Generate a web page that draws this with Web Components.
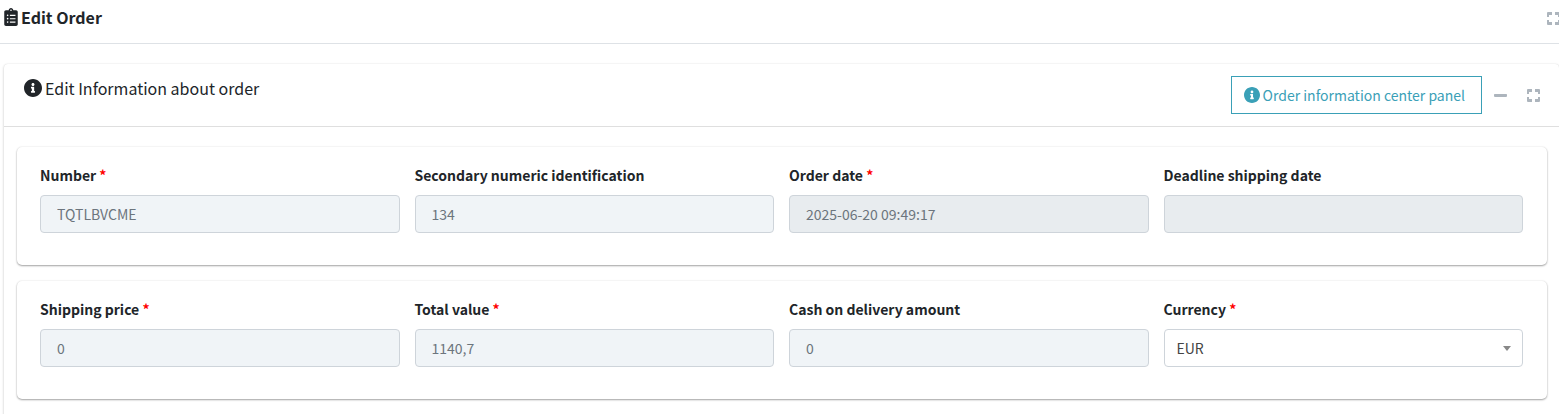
<!DOCTYPE html>
<html lang="en">
<head>
<meta charset="utf-8">
<meta name="viewport" content="width=device-width, initial-scale=1">
<title>Edit Order</title>
<style>
  body {
    margin: 0;
    background: #fff;
    color: #212529;
    font: 400 14px/24px "Noto Sans CJK SC", "Noto Sans", sans-serif;
    overflow-x: hidden;
  }
</style>
</head>
<body>
<order-page></order-page>

<script>
const ICONS = {
  clipboard: ['0 0 384 512', 'M336 64h-80c0-35.3-28.7-64-64-64s-64 28.7-64 64H48C21.5 64 0 85.5 0 112v352c0 26.5 21.5 48 48 48h288c26.5 0 48-21.5 48-48V112c0-26.5-21.5-48-48-48zM96 424c-13.3 0-24-10.7-24-24s10.7-24 24-24 24 10.7 24 24-10.7 24-24 24zm0-96c-13.3 0-24-10.7-24-24s10.7-24 24-24 24 10.7 24 24-10.7 24-24 24zm0-96c-13.3 0-24-10.7-24-24s10.7-24 24-24 24 10.7 24 24-10.7 24-24 24zm96-192c13.3 0 24 10.7 24 24s-10.7 24-24 24-24-10.7-24-24 10.7-24 24-24zm128 368c0 4.4-3.6 8-8 8H168c-4.4 0-8-3.6-8-8v-16c0-4.4 3.6-8 8-8h144c4.4 0 8 3.6 8 8v16zm0-96c0 4.4-3.6 8-8 8H168c-4.4 0-8-3.6-8-8v-16c0-4.4 3.6-8 8-8h144c4.4 0 8 3.6 8 8v16zm0-96c0 4.4-3.6 8-8 8H168c-4.4 0-8-3.6-8-8v-16c0-4.4 3.6-8 8-8h144c4.4 0 8 3.6 8 8v16z'],
  info: ['8 8 496 496', 'M256 8C119.043 8 8 119.083 8 256c0 136.997 111.043 248 248 248s248-111.003 248-248C504 119.083 392.957 8 256 8zm0 110c23.196 0 42 18.804 42 42s-18.804 42-42 42-42-18.804-42-42 18.804-42 42-42zm56 254c0 6.627-5.373 12-12 12h-88c-6.627 0-12-5.373-12-12v-24c0-6.627 5.373-12 12-12h12v-64h-12c-6.627 0-12-5.373-12-12v-24c0-6.627 5.373-12 12-12h64c6.627 0 12 5.373 12 12v100h12c6.627 0 12 5.373 12 12v24z'],
  expand: ['0 0 13 13', 'M0 1Q0 0 1 0H5V3H2V5H0zM8 0h4q1 0 1 1v4H11V3H8zM0 8H2v2H5v3H1q-1 0-1-1zM11 8h2v4q0 1-1 1H8V10h3z'],
  minus: ['0 32 448 448', 'M416 208H32c-17.67 0-32 14.33-32 32v32c0 17.67 14.33 32 32 32h384c17.67 0 32-14.33 32-32v-32c0-17.67-14.33-32-32-32z']
};

class BaseElement extends HTMLElement {
  connectedCallback() {
    if (this.shadowRoot) return;
    this.attachShadow({ mode: 'open' }).innerHTML = this.render();
  }
}

customElements.define('ui-icon', class extends BaseElement {
  render() {
    const [box, d] = ICONS[this.getAttribute('name')];
    return `<style>
      :host { display: block; flex: none; width: 13px; height: 13px; }
      svg { display: block; width: 100%; height: 100%; fill: currentColor; }
    </style><svg viewBox="${box}" aria-hidden="true"><path d="${d}"/></svg>`;
  }
});

customElements.define('tool-button', class extends BaseElement {
  render() {
    return `<style>
      :host { display: block; color: #adb5bd; }
      button { display: block; margin: 0; padding: 0; border: 0; background: none; color: inherit; cursor: pointer; }
    </style><button type="button" aria-label="${this.getAttribute('label')}"><ui-icon name="${this.getAttribute('icon')}"></ui-icon></button>`;
  }
});

customElements.define('info-button', class extends BaseElement {
  render() {
    return `<style>
      :host { display: block; }
      button {
        display: flex; align-items: center; gap: 3px; box-sizing: border-box; height: 38px;
        margin: 0; padding: 0 16px 0 12px; border: 1px solid #3aa0b7; background: #fff;
        color: #3aa0b7; font: inherit; cursor: pointer; white-space: nowrap;
      }
      ui-icon { width: 16px; height: 16px; }
    </style><button type="button"><ui-icon name="info"></ui-icon><span><slot></slot></span></button>`;
  }
});

customElements.define('page-bar', class extends BaseElement {
  render() {
    return `<style>
      :host { display: flex; justify-content: space-between; align-items: flex-start; padding: 5px 0 14px 4px; border-bottom: 1px solid #dee2e6; }
      h1 { display: flex; align-items: center; gap: 3px; margin: 0; font-size: 16px; line-height: 24px; font-weight: 700; }
      h1 ui-icon { width: 14px; height: 18px; }
      tool-button { padding-top: 7px; margin-right: -1px; }
    </style><h1><ui-icon name="clipboard"></ui-icon><slot></slot></h1>
    <tool-button icon="expand" label="Maximize page"></tool-button>`;
  }
});

customElements.define('info-card', class extends BaseElement {
  render() {
    return `<style>
      :host { display: block; margin: 20px 0 0 4px; border-radius: 4px; background: #fff; box-shadow: 0 0 1px rgba(0,0,0,.125), 0 1px 3px rgba(0,0,0,.2); }
      header { display: flex; justify-content: space-between; align-items: flex-start; padding: 12px 19px 12px 20px; border-bottom: 1px solid #dfdfdf; }
      h2 { display: flex; align-items: center; gap: 3px; margin: 0; font-size: 16px; line-height: 24px; font-weight: 400; }
      h2 ui-icon { width: 18px; height: 18px; }
      .tools { display: flex; align-items: center; }
      .tools tool-button { margin-left: 20px; }
      .tools tool-button:first-of-type { margin-left: 12px; }
      .body { display: grid; gap: 16px; padding: 20px 12px 20px 13px; }
    </style>
    <header>
      <h2><ui-icon name="info"></ui-icon><slot name="title"></slot></h2>
      <div class="tools">
        <slot name="action"></slot>
        <tool-button icon="minus" label="Collapse"></tool-button>
        <tool-button icon="expand" label="Maximize"></tool-button>
      </div>
    </header>
    <div class="body"><slot></slot></div>`;
  }
});

customElements.define('field-group', class extends BaseElement {
  render() {
    return `<style>
      :host {
        display: grid; grid-template-columns: repeat(4, minmax(0, 1fr)); gap: 15px;
        padding: 16px 24px 32px 23px; border-radius: 5px; background: #fff;
        box-shadow: 0 0 2px rgba(0,0,0,.1), 0 1px 2px rgba(0,0,0,.35);
      }
    </style><slot></slot>`;
  }
});

const FIELD_CSS = `
  :host { display: block; }
  label { display: block; margin-bottom: 8px; font-weight: 700; line-height: 24px; }
  .required { color: #f00; }
  input, select {
    display: block; box-sizing: border-box; width: 100%; height: 38px; margin: 0;
    border: 1px solid #ced4da; border-radius: 4px; font: inherit; outline: 0;
  }`;
const fieldLabel = el => `<label for="control">${el.getAttribute('label')}${
  el.hasAttribute('required') ? ' <span class="required">*</span>' : ''}</label>`;

customElements.define('text-field', class extends BaseElement {
  render() {
    return `<style>${FIELD_CSS}
      input { padding: 0 16px; background: #f0f4f7; color: #6c757d; }
      :host([locked]) input { background: #e8ecef; }
    </style>${fieldLabel(this)}<input id="control" type="text" readonly value="${this.getAttribute('value') || ''}">`;
  }
});

customElements.define('select-field', class extends BaseElement {
  render() {
    return `<style>${FIELD_CSS}
      .box { display: grid; align-items: center; }
      .box > * { grid-area: 1 / 1; }
      select { appearance: none; padding: 0 32px 0 12px; background: #fff; color: #444; }
      svg { justify-self: end; width: 8px; height: 5px; margin-right: 12px; fill: #888; pointer-events: none; }
    </style>${fieldLabel(this)}
    <div class="box">
      <select id="control"><option selected>${this.getAttribute('value')}</option></select>
      <svg viewBox="0 0 8 5" aria-hidden="true"><path d="M0 0h8L4 5z"/></svg>
    </div>`;
  }
});

customElements.define('order-page', class extends BaseElement {
  render() {
    return `<style>:host { display: flow-root; }</style>
    <page-bar>Edit Order</page-bar>
    <info-card>
      <span slot="title">Edit Information about order</span>
      <info-button slot="action">Order information center panel</info-button>
      <field-group>
        <text-field label="Number" value="TQTLBVCME" required></text-field>
        <text-field label="Secondary numeric identification" value="134"></text-field>
        <text-field label="Order date" value="2025-06-20 09:49:17" required locked></text-field>
        <text-field label="Deadline shipping date" locked></text-field>
      </field-group>
      <field-group>
        <text-field label="Shipping price" value="0" required></text-field>
        <text-field label="Total value" value="1140,7" required></text-field>
        <text-field label="Cash on delivery amount" value="0"></text-field>
        <select-field label="Currency" value="EUR" required></select-field>
      </field-group>
    </info-card>`;
  }
});
</script>
</body>
</html>
